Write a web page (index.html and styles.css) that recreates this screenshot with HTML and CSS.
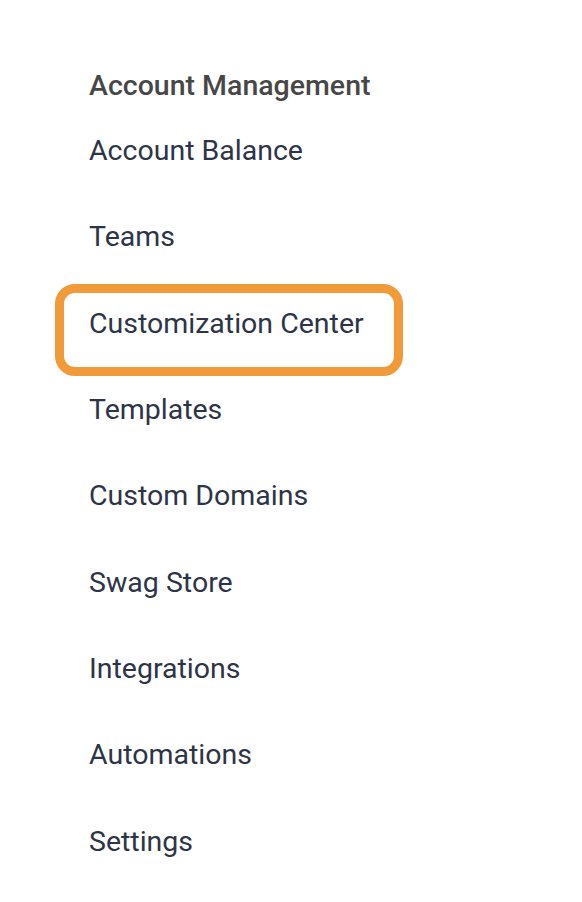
FILE: index.html
```html
<!DOCTYPE html>
<html lang="en">
<head>
<meta charset="utf-8">
<title>Account Management</title>
<link rel="stylesheet" href="styles.css">
</head>
<body>
<nav class="menu">
  <h2 class="menu-title">Account Management</h2>
  <ul class="menu-list">
    <li class="menu-item">Account Balance</li>
    <li class="menu-item">Teams</li>
    <li class="menu-item menu-item--highlight">Customization Center</li>
    <li class="menu-item">Templates</li>
    <li class="menu-item">Custom Domains</li>
    <li class="menu-item">Swag Store</li>
    <li class="menu-item">Integrations</li>
    <li class="menu-item">Automations</li>
    <li class="menu-item">Settings</li>
  </ul>
</nav>
</body>
</html>
```
FILE: styles.css
```css
html, body {
  margin: 0;
  padding: 0;
  background: #ffffff;
}
body {
  font-family: Roboto, "Liberation Sans", sans-serif;
  width: 582px;
  height: 902px;
  overflow: hidden;
}
.menu {
  padding: 68px 0 0 89px;
}
.menu-title {
  margin: 0 0 4px 0;
  font-size: 28.5px;
  line-height: 36px;
  font-weight: 500;
  color: #474747;
}
.menu-list {
  list-style: none;
  margin: 0;
  padding: 0;
}
.menu-item {
  position: relative;
  font-size: 28.5px;
  line-height: 86.33px;
  color: #2e3447;
}
.menu-item--highlight::after {
  content: "";
  position: absolute;
  box-sizing: border-box;
  left: -34px;
  top: 3px;
  width: 348px;
  height: 92px;
  border: 9.5px solid #f09a3a;
  border-radius: 20px;
}
```
